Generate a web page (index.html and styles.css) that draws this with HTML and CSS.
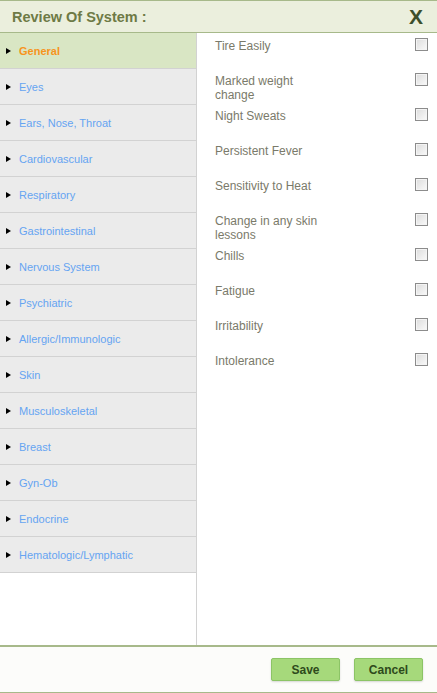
FILE: index.html
```html
<!DOCTYPE html>
<html lang="en">

<head>
    <meta charset="UTF-8">
    <title>Review Of System</title>
    <link rel="stylesheet" href="styles.css">
</head>

<body>
    <div class="dialog">
        <div class="header">
            <span class="title">Review Of System :</span>
            <span class="close">X</span>
        </div>
        <div class="main">
            <ul class="nav">
                <li class="active">General</li>
                <li>Eyes</li>
                <li>Ears, Nose, Throat</li>
                <li>Cardiovascular</li>
                <li>Respiratory</li>
                <li>Gastrointestinal</li>
                <li>Nervous System</li>
                <li>Psychiatric</li>
                <li>Allergic/Immunologic</li>
                <li>Skin</li>
                <li>Musculoskeletal</li>
                <li>Breast</li>
                <li>Gyn-Ob</li>
                <li>Endocrine</li>
                <li>Hematologic/Lymphatic</li>
            </ul>
            <div class="items">
                <label class="row"><span class="text">Tire Easily</span><input type="checkbox"></label>
                <label class="row"><span class="text">Marked weight change</span><input type="checkbox"></label>
                <label class="row"><span class="text">Night Sweats</span><input type="checkbox"></label>
                <label class="row"><span class="text">Persistent Fever</span><input type="checkbox"></label>
                <label class="row"><span class="text">Sensitivity to Heat</span><input type="checkbox"></label>
                <label class="row"><span class="text">Change in any skin lessons</span><input type="checkbox"></label>
                <label class="row"><span class="text">Chills</span><input type="checkbox"></label>
                <label class="row"><span class="text">Fatigue</span><input type="checkbox"></label>
                <label class="row"><span class="text">Irritability</span><input type="checkbox"></label>
                <label class="row"><span class="text">Intolerance</span><input type="checkbox"></label>
            </div>
        </div>
        <div class="footer">
            <button type="button" class="btn">Save</button>
            <button type="button" class="btn">Cancel</button>
        </div>
    </div>
</body>

</html>
```
FILE: styles.css
```css
body {
    margin: 0;
    font-family: "Liberation Sans", Arial, sans-serif;
    background: #fff;
}

.dialog {
    width: 437px;
    height: 693px;
    display: flex;
    flex-direction: column;
}

.header {
    height: 31px;
    border-top: 1px solid #a7b98a;
    border-bottom: 1px solid #a7b98a;
    background-color: #ebefdd;
    display: flex;
    align-items: center;
    justify-content: space-between;
    padding: 0 14px 0 12px;
}

.title {
    font-size: 14.5px;
    font-weight: bold;
    color: #6e7a45;
}

.close {
    font-size: 21px;
    font-weight: bold;
    color: #3d4f2c;
    margin-top: 1px;
}

.main {
    flex: 1;
    display: flex;
}

.nav {
    list-style: none;
    margin: 0;
    padding: 0;
    width: 196px;
    border-right: 1px solid #d2d2d2;
}

.nav li {
    height: 35px;
    border-bottom: 1px solid #d2d2d2;
    background-color: #ebebeb;
    color: #65a4f2;
    font-size: 11px;
    display: flex;
    align-items: center;
    padding-left: 6px;
}

.nav li::before {
    content: "";
    border-left: 5px solid #000;
    border-top: 3px solid transparent;
    border-bottom: 3px solid transparent;
    margin-right: 8px;
}

.nav li.active {
    background-color: #d9e6c4;
    color: #f7941d;
    font-weight: bold;
}

.items {
    flex: 1;
    padding: 4px 9px 0 18px;
}

.row {
    height: 35px;
    display: flex;
    justify-content: space-between;
    align-items: flex-start;
}

.text {
    width: 115px;
    font-size: 12px;
    line-height: 14px;
    color: #7a7a6a;
    padding-top: 2px;
}

.row input {
    appearance: none;
    width: 13px;
    height: 13px;
    margin: 1px 0 0 0;
    border: 1px solid #8c8c8c;
    background: linear-gradient(135deg, #dcdcdc, #fafafa);
    box-shadow: inset 0 0 0 1px #f4f4f4;
}

.footer {
    height: 45px;
    border-top: 2px solid #a7b98a;
    border-bottom: 1px solid #a7b98a;
    background-color: #fcfcfa;
    display: flex;
    justify-content: flex-end;
    align-items: center;
    gap: 14px;
    padding-right: 14px;
}

.btn {
    width: 69px;
    height: 23px;
    background-color: #a6d97b;
    border: 1px solid #8cc466;
    border-radius: 2px;
    color: #2e4a1c;
    font-family: "Liberation Sans", Arial, sans-serif;
    font-size: 12px;
    font-weight: bold;
    box-shadow: 0 1px 2px rgba(0, 0, 0, 0.15);
    padding: 0;
}
```
